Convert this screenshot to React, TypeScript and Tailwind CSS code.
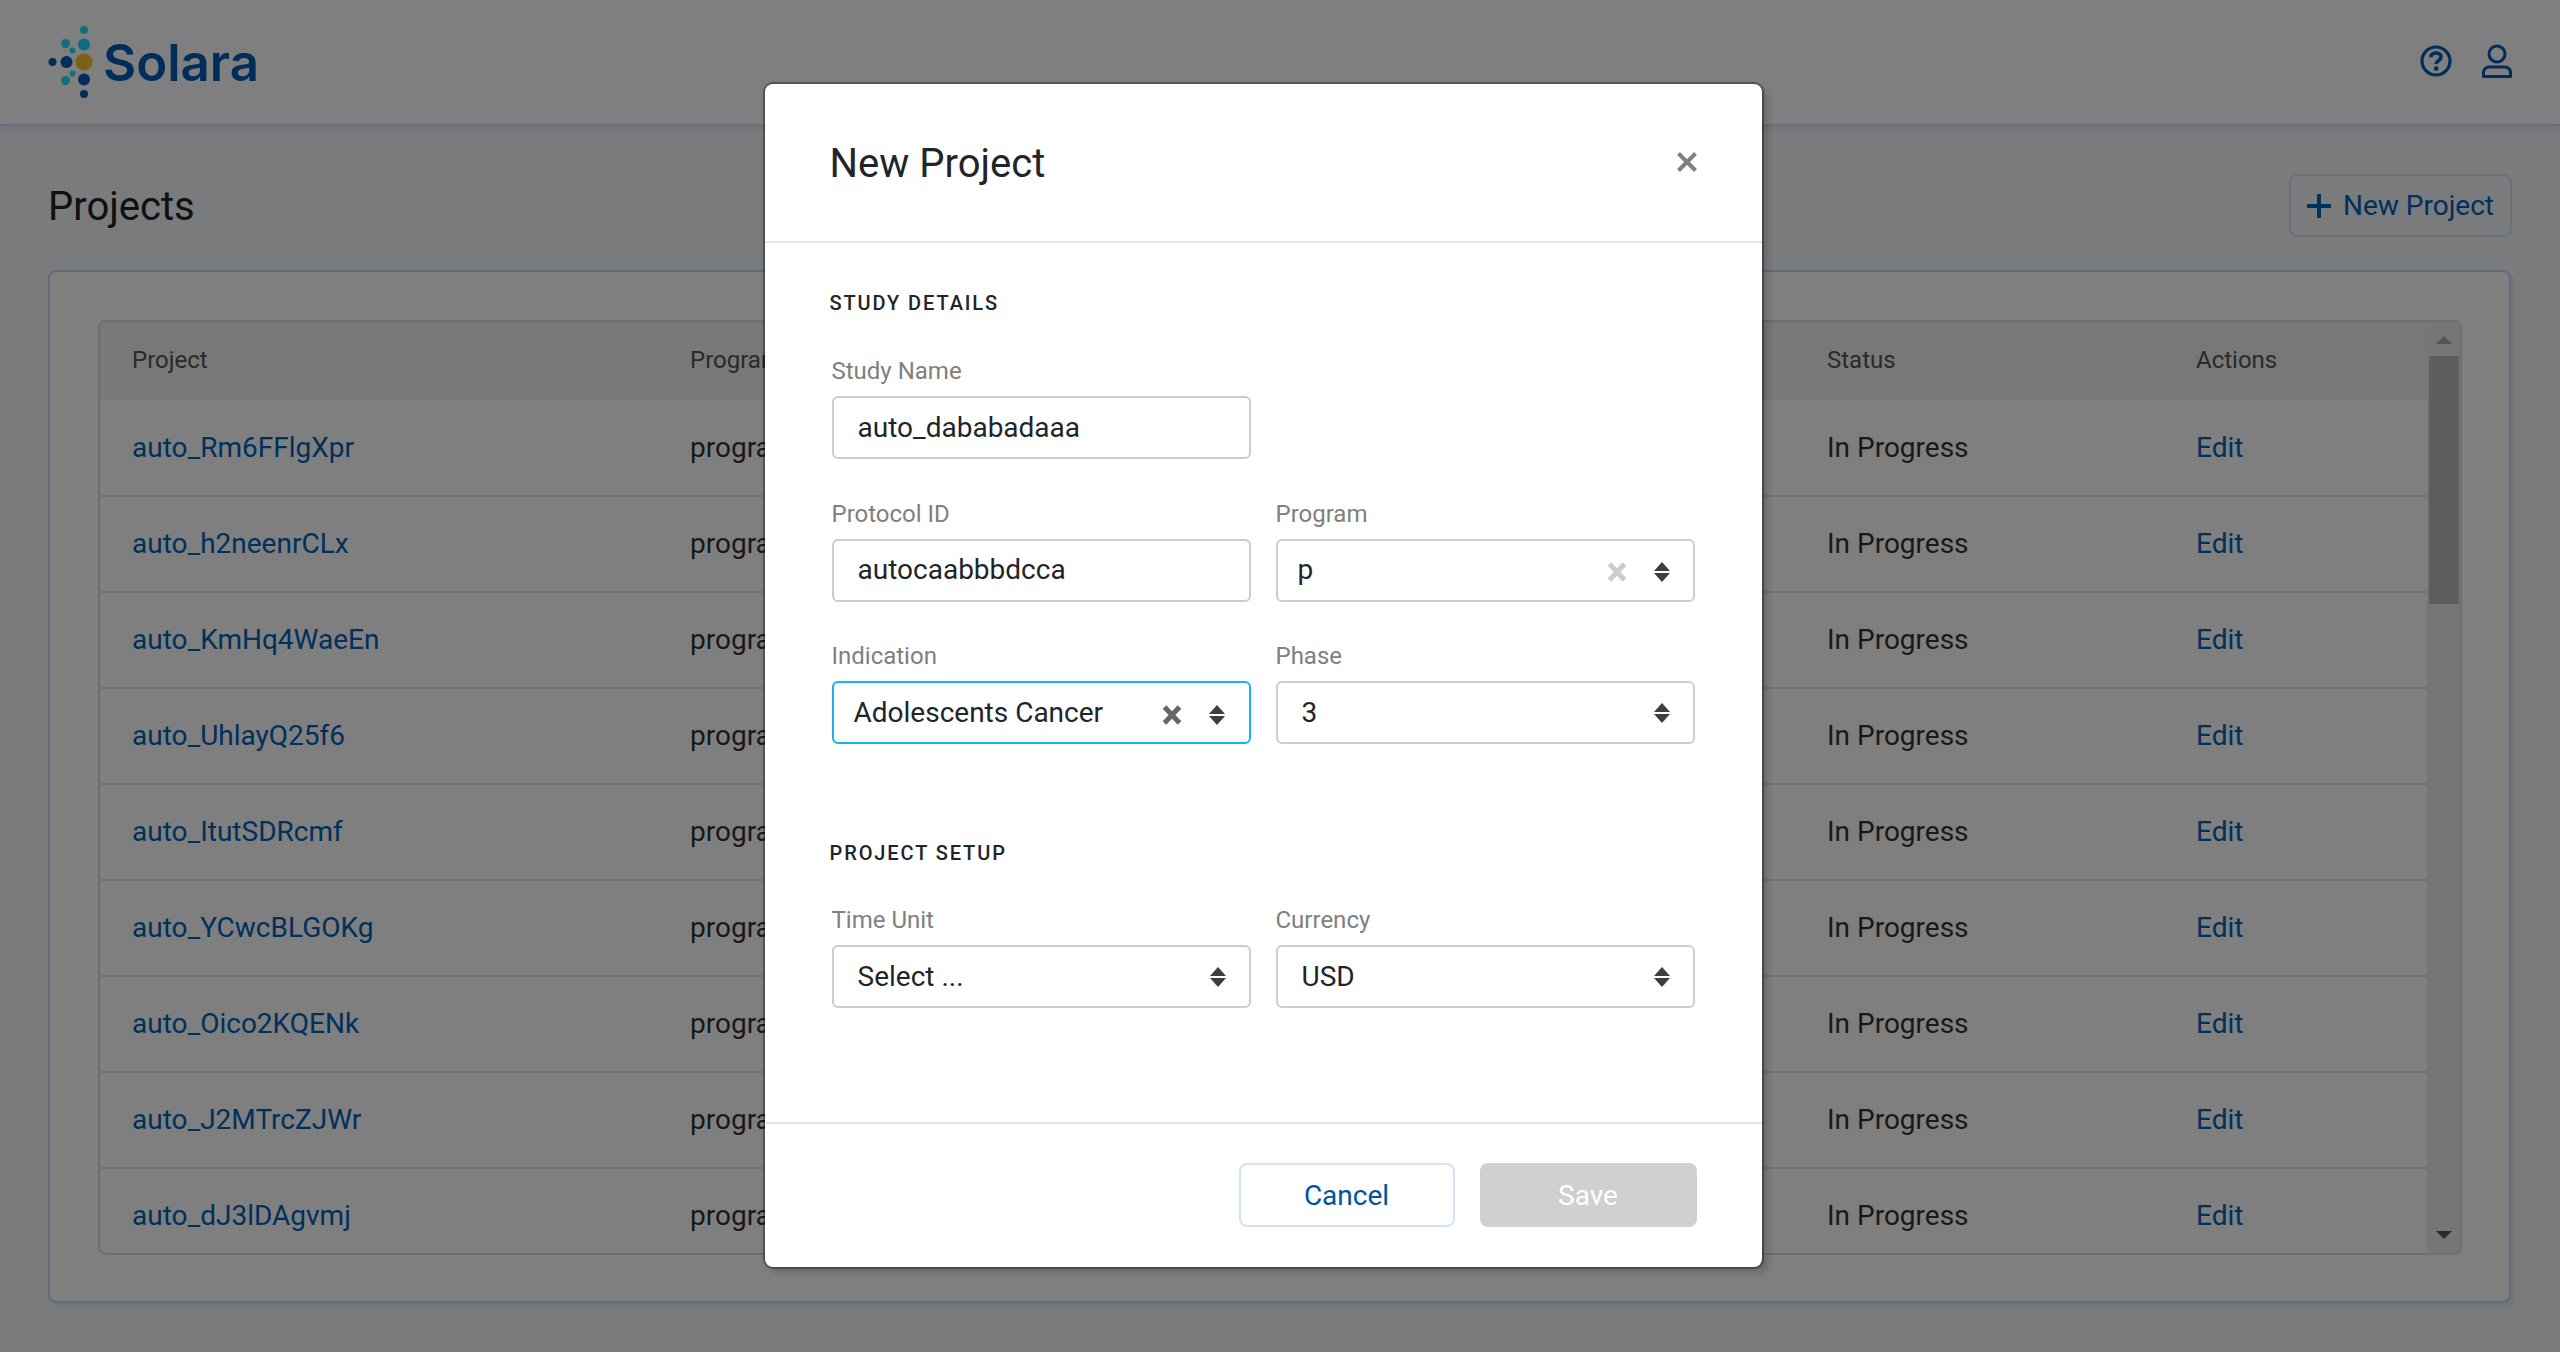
import React from "react";

const rows = [
  "auto_Rm6FFlgXpr",
  "auto_h2neenrCLx",
  "auto_KmHq4WaeEn",
  "auto_UhlayQ25f6",
  "auto_ItutSDRcmf",
  "auto_YCwcBLGOKg",
  "auto_Oico2KQENk",
  "auto_J2MTrcZJWr",
  "auto_dJ3lDAgvmj",
];

function Logo() {
  const dots: [number, number, number, string][] = [
    [36, 12, 4, "#20dcff"],
    [36, 26.5, 6, "#1cdcff"],
    [17.5, 25.5, 4.5, "#20dcff"],
    [24.5, 32.5, 3, "#20dcff"],
    [18.5, 44, 6, "#005ab4"],
    [4.5, 44, 4, "#005ab4"],
    [24.5, 55.5, 3, "#20dcff"],
    [17.5, 62.5, 4.5, "#20dcff"],
    [36, 61.5, 6, "#005ab4"],
    [36, 76, 4, "#005ab4"],
    [36, 44, 8.5, "#ffbc34"],
  ];
  return (
    <div className="flex items-center">
      <svg width="46" height="82" viewBox="0 0 46 82" className="mt-[-6px]">
        {dots.map(([cx, cy, r, fill], i) => (
          <circle key={i} cx={cx} cy={cy} r={r} fill={fill} />
        ))}
      </svg>
      <span className="ml-[9px] font-['Inter',sans-serif] text-[51px] font-semibold leading-none text-[#005ab4]">
        Solara
      </span>
    </div>
  );
}

function Arrows({ color = "#3a3f44" }: { color?: string }) {
  return (
    <svg width="16" height="20" viewBox="0 0 16 20" className="shrink-0">
      <path d="M8 0 L16 9 H0 Z M0 11 H16 L8 20 Z" fill={color} />
    </svg>
  );
}

function Clear({ color }: { color: string }) {
  return (
    <svg width="20" height="20" viewBox="0 0 20 20" className="shrink-0">
      <path d="M2.5 2 L17.5 18 M17.5 2 L2.5 18" stroke={color} strokeWidth="5" fill="none" />
    </svg>
  );
}

function Label({ children }: { children: React.ReactNode }) {
  return <div className="mb-[10px] h-[32px] text-[24px] leading-[34px] text-[#808080]">{children}</div>;
}

function TextField({ label, value }: { label: string; value: string }) {
  return (
    <div>
      <Label>{label}</Label>
      <div className="flex h-[63px] items-center rounded-[6px] border-2 border-[#cccccc] pl-[24px] text-[28px] text-[#212529]">
        {value}
      </div>
    </div>
  );
}

function SelectField({
  label,
  value,
  clear,
  focus,
  textClass,
  arrowsClass,
}: {
  label: string;
  value: string;
  clear?: string;
  focus?: boolean;
  textClass: string;
  arrowsClass?: string;
}) {
  return (
    <div>
      <Label>{label}</Label>
      <div
        className={`flex h-[63px] items-center rounded-[6px] border-2 pr-[23px] text-[28px] text-[#212529] ${
          focus ? "border-[#14b4ec]" : "border-[#cccccc]"
        }`}
      >
        <span className={`flex-1 ${textClass}`}>{value}</span>
        {clear && (
          <span className={`mr-[27px] flex ${arrowsClass ?? ""}`}>
            <Clear color={clear} />
          </span>
        )}
        <span className={`flex ${arrowsClass ?? ""}`}>
          <Arrows />
        </span>
      </div>
    </div>
  );
}

function SectionTitle({ children }: { children: React.ReactNode }) {
  return (
    <div className="ml-[-2px] h-[24px] text-[20px] font-medium leading-[24px] tracking-[1.9px] text-[#212529]">
      {children}
    </div>
  );
}

function Page() {
  return (
    <div className="flex h-[1352px] flex-col overflow-hidden bg-[#f4f6f8]">
      <header className="flex h-[126px] shrink-0 items-center justify-between border-b-2 border-[#cfe2f6] bg-white pl-[48px] pr-[48px] shadow-[0_4px_4px_rgba(190,215,240,0.35)]">
        <Logo />
        <div className="flex items-center gap-[28px] pb-[2px] text-[#005ab4]">
          <svg width="36" height="36" viewBox="0 0 36 36" fill="none">
            <circle cx="18" cy="18" r="14" stroke="currentColor" strokeWidth="3.2" />
            <path d="M13 14.2 C13 8.5 23 8.5 23 14.2 C23 17.6 18.2 17.4 18.2 21" stroke="currentColor" strokeWidth="3.6" />
            <circle cx="18.2" cy="25.6" r="2.4" fill="currentColor" />
          </svg>
          <svg width="30" height="34" viewBox="0 0 30 34" fill="none">
            <circle cx="15" cy="10" r="8" stroke="currentColor" strokeWidth="3" />
            <path d="M7 23 H23 C26 23 28.5 25.5 28.5 28.5 V32.5 H1.5 V28.5 C1.5 25.5 4 23 7 23 Z" stroke="currentColor" strokeWidth="3" strokeLinejoin="round" />
          </svg>
        </div>
      </header>
      <main className="flex flex-1 flex-col px-[48px] pt-[48px]">
        <div className="flex h-[63px] items-center justify-between">
          <h1 className="pt-[2px] text-[40px] font-normal text-[#222222]">Projects</h1>
          <button className="flex h-[63px] w-[223px] items-center rounded-[8px] border-2 border-[#d5e2f1] pl-[16px] text-[28px] text-[#0060b8]">
            <svg width="24" height="24" viewBox="0 0 24 24" className="mr-[12px]">
              <path d="M12 0 V24 M0 12 H24" stroke="currentColor" strokeWidth="4" />
            </svg>
            New Project
          </button>
        </div>
        <section className="mt-[33px] h-[1033px] w-[2463px] rounded-[8px] border-2 border-[#bfdaf5] bg-white p-[48px] shadow-[4px_4px_0_rgba(190,215,240,0.3)]">
          <div className="flex h-[935px] w-[2364px] overflow-hidden rounded-[8px] border-2 border-[#dddddd]">
            <div className="flex-1 overflow-hidden">
              <table className="w-full table-fixed border-collapse">
                <colgroup>
                  <col className="w-[558px]" />
                  <col />
                  <col className="w-[369px]" />
                  <col className="w-[263px]" />
                </colgroup>
                <thead>
                  <tr className="h-[78px] bg-[#f0f0f0] text-left text-[24px] text-[#555555]">
                    <th className="pb-[2px] pl-[32px] font-normal">Project</th>
                    <th className="pb-[2px] pl-[32px] font-normal">Program</th>
                    <th className="pb-[2px] pl-[32px] font-normal">Status</th>
                    <th className="pb-[2px] pl-[32px] font-normal">Actions</th>
                  </tr>
                </thead>
                <tbody>
                  {rows.map((r) => (
                    <tr key={r} className="h-[96px] border-b-2 border-[#e4e4e4] text-[28px] text-[#333333]">
                      <td className="pl-[32px] text-[#0060b8]">{r}</td>
                      <td className="pl-[32px]">program_1</td>
                      <td className="pl-[32px]">In Progress</td>
                      <td className="pl-[32px] text-[#0060b8]">Edit</td>
                    </tr>
                  ))}
                </tbody>
              </table>
            </div>
            <div className="flex w-[33px] shrink-0 flex-col items-center bg-[#ececec] pt-[14px]">
              <svg width="16" height="8" viewBox="0 0 16 8">
                <path d="M8 0 L16 8 H0 Z" fill="#a8a8a8" />
              </svg>
              <div className="mt-[12px] h-[248px] w-[30px] bg-[#bdbdbd]" />
              <div className="flex-1" />
              <svg width="16" height="8" viewBox="0 0 16 8" className="mb-[14px]">
                <path d="M0 0 H16 L8 8 Z" fill="#555555" />
              </svg>
            </div>
          </div>
        </section>
      </main>
    </div>
  );
}

function Modal() {
  return (
    <div className="absolute inset-0 flex items-start justify-center bg-black/50 pr-[34px] pt-[84px]">
      <div className="flex h-[1183px] w-[997px] flex-col rounded-[8px] bg-white shadow-[0_0_1px_2px_rgba(0,0,0,0.35),6px_6px_6px_rgba(0,0,0,0.16)]">
        <div className="flex h-[159px] shrink-0 items-center justify-between border-b-2 border-[#e6e6e6] pl-[65px] pr-[65px]">
          <h2 className="pt-[2px] text-[40px] font-normal text-[#212529]">New Project</h2>
          <svg width="20" height="20" viewBox="0 0 20 20" className="mb-[2px]">
            <path d="M1.5 1.5 L18.5 18.5 M18.5 1.5 L1.5 18.5" stroke="#808080" strokeWidth="4" />
          </svg>
        </div>
        <div className="flex-1 px-[67px] pt-[48px]">
          <SectionTitle>STUDY DETAILS</SectionTitle>
          <div className="mt-[39px] grid grid-cols-2 gap-x-[25px] gap-y-[37.5px]">
            <TextField label="Study Name" value="auto_dababadaaa" />
            <div />
            <TextField label="Protocol ID" value="autocaabbbdcca" />
            <SelectField label="Program" value="p" clear="#cccccc" textClass="pl-[20px]" arrowsClass="mt-[4px]" />
            <SelectField
              label="Indication"
              value="Adolescents Cancer"
              clear="#666666"
              focus
              textClass="pl-[20px]"
              arrowsClass="mt-[4px] mr-[1px]"
            />
            <SelectField label="Phase" value="3" textClass="pl-[24px]" />
          </div>
          <div className="mt-[97px]">
            <SectionTitle>PROJECT SETUP</SectionTitle>
          </div>
          <div className="mt-[38px] grid grid-cols-2 gap-x-[25px]">
            <SelectField label="Time Unit" value="Select ..." textClass="pl-[24px]" />
            <SelectField label="Currency" value="USD" textClass="pl-[24px]" />
          </div>
        </div>
        <div className="flex h-[145px] shrink-0 items-start justify-end gap-[25px] border-t-2 border-[#e6e6e6] pr-[65px] pt-[39px]">
          <button className="h-[64px] w-[216px] rounded-[8px] border-2 border-[#d3e3f7] pt-[2px] text-[28px] text-[#0053a0]">
            Cancel
          </button>
          <button className="h-[64px] w-[217px] rounded-[8px] bg-[#d0d0d0] pt-[2px] text-[28px] text-white">Save</button>
        </div>
      </div>
    </div>
  );
}

export default function App() {
  return (
    <div className="relative h-[1352px] w-[2560px] overflow-hidden font-['Roboto',sans-serif]">
      <Page />
      <Modal />
    </div>
  );
}
